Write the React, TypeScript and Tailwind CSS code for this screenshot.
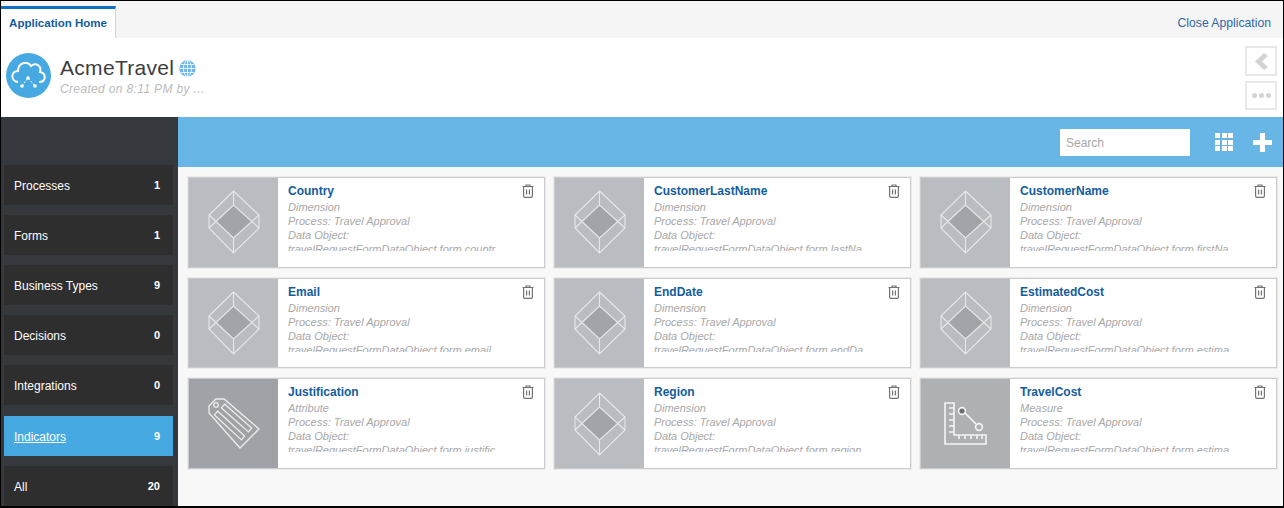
const navItems = [
    { name: 'Processes', count: 1 },
    { name: 'Forms', count: 1 },
    { name: 'Business Types', count: 9 },
    { name: 'Decisions', count: 0 },
    { name: 'Integrations', count: 0 },
    { name: 'Indicators', count: 9, active: true },
    { name: 'All', count: 20 },
];

const cards = [
    { title: 'Country', kind: 'Dimension', obj: 'travelRequestFormDataObject.form.countr...' },
    { title: 'CustomerLastName', kind: 'Dimension', obj: 'travelRequestFormDataObject.form.lastNa...' },
    { title: 'CustomerName', kind: 'Dimension', obj: 'travelRequestFormDataObject.form.firstNa...' },
    { title: 'Email', kind: 'Dimension', obj: 'travelRequestFormDataObject.form.email' },
    { title: 'EndDate', kind: 'Dimension', obj: 'travelRequestFormDataObject.form.endDa...' },
    { title: 'EstimatedCost', kind: 'Dimension', obj: 'travelRequestFormDataObject.form.estima...' },
    { title: 'Justification', kind: 'Attribute', obj: 'travelRequestFormDataObject.form.justific...' },
    { title: 'Region', kind: 'Dimension', obj: 'travelRequestFormDataObject.form.region' },
    { title: 'TravelCost', kind: 'Measure', obj: 'travelRequestFormDataObject.form.estima...' },
];

const CubeIcon = () => (
    <svg width="52" height="64" viewBox="0 0 52 64" fill="none" stroke="#e6e8ea" strokeWidth="1.1">
        <path d="M25.5 15 L43 31.5 L25.5 48 L8 31.5 Z" fill="#a1a5a9" stroke="none" />
        <path d="M25.5 1 L51 25 L51 38 L25.5 63 L1 38 L1 25 Z" />
        <path d="M25.5 1 L25.5 15 M1 25 L25.5 48 L51 25 M1 38 L25.5 15 L51 38 M25.5 48 L25.5 63" />
    </svg>
);

const TagIcon = () => (
    <svg width="52" height="52" viewBox="0 0 52 52" fill="none" stroke="#eceeef" strokeWidth="1.3">
        <path d="M1 8 L8 1 L16 1 L51 31 L32 50 L1 15 Z" />
        <circle cx="8" cy="7" r="2.3" />
        <path d="M16.6 6.1 L43.6 30.1 L40.4 33.9 L13.4 9.9 Z" />
        <path d="M9.6 13.1 L36.6 38.1 L33.4 41.9 L6.4 16.9 Z" />
    </svg>
);

const RulerIcon = () => (
    <svg width="44" height="44" viewBox="0 0 44 44" fill="none" stroke="#f4f5f6" strokeWidth="1.6">
        <path d="M1 1 L10 1 L10 33 L42 33 L42 42 L1 42 Z" />
        <path d="M5 6 L10 6 M5 12 L10 12 M5 18 L10 18 M5 24 L10 24 M5 30 L10 30" />
        <path d="M15 37 L15 33 M21 37 L21 33 M27 37 L27 33 M33 37 L33 33 M38 37 L38 33" />
        <path d="M21 11 L32 22" />
        <circle cx="18" cy="9" r="3.4" fill="#6b6f73" />
        <circle cx="35" cy="25" r="3.4" />
    </svg>
);

const TrashIcon = () => (
    <svg width="12" height="14" viewBox="0 0 12 14" fill="none" stroke="#6f7276" strokeWidth="1.2">
        <path d="M0.5 2.5 L11.5 2.5 M4 2.5 L4 1 L8 1 L8 2.5" />
        <path d="M1.6 2.5 L1.6 12 Q1.6 13.4 3 13.4 L9 13.4 Q10.4 13.4 10.4 12 L10.4 2.5" />
        <path d="M4.6 5.5 L4.6 10.5 M7.4 5.5 L7.4 10.5" />
    </svg>
);

const Card = ({ card }: { card: typeof cards[number] }) => (
    <div className="flex h-[90.7px] border border-[#cccccc] bg-white shadow-[0_0_0_1px_#ebebeb]">
        <div className={`flex w-[89px] shrink-0 items-center justify-center ${card.kind === 'Dimension' ? 'bg-[#b9bdc1]' : card.kind === 'Attribute' ? 'bg-[#9fa2a6]' : 'bg-[#adb1b4]'}`}>
            {card.kind === 'Dimension' && <CubeIcon />}
            {card.kind === 'Attribute' && <TagIcon />}
            {card.kind === 'Measure' && <RulerIcon />}
        </div>
        <div className="relative min-w-0 flex-1 pl-[10px] pt-[5px]">
            <div className="text-[12px] font-bold leading-[16px] text-[#145c9e]">{card.title}</div>
            <div className="mt-[1px] h-[51px] overflow-hidden text-[11px] italic leading-[14px] text-[#a8a8a8]">
                <div>{card.kind}</div>
                <div>Process: Travel Approval</div>
                <div>Data Object:</div>
                <div className="whitespace-nowrap">{card.obj}</div>
            </div>
            <button className="absolute right-[10px] top-[6px]"><TrashIcon /></button>
        </div>
    </div>
);

const App = () => {
    return (
        <div className="flex h-[508px] w-[1284px] flex-col overflow-hidden border border-b-2 border-black bg-white font-['Liberation_Sans',Arial,sans-serif]">
            <div className="flex h-[37px] shrink-0 items-end justify-between bg-[#f5f5f5]">
                <div className="flex h-[32px] w-[115px] items-center justify-center border-r border-t-[3px] border-r-[#cdd5dc] border-t-[#0f6fc6] bg-white text-[11.5px] font-bold text-[#145c9e]">
                    Application Home
                </div>
                <a className="mb-[6px] mr-[12px] text-[12.2px] text-[#2f68a8]">Close Application</a>
            </div>

            <div className="flex h-[79px] shrink-0 items-start justify-between">
                <div className="flex items-start pl-[5px] pt-[15px]">
                    <svg width="45" height="45" viewBox="0 0 45 45" fill="none">
                        <circle cx="22.5" cy="22.5" r="22.5" fill="#47a9e2" />
                        <path d="M12 29 C4 28 5 18 12 18 C12 10 21 7 25 13 C30 9 36 13 34 19 C41 20 40 29 33 29" stroke="#fff" strokeWidth="2" />
                        <path d="M16 33 L22 25 L29 33" stroke="#fff" strokeWidth="1" strokeDasharray="2 1.5" />
                        <circle cx="16" cy="33" r="1.8" fill="#fff" />
                        <circle cx="22" cy="25" r="1.8" fill="#fff" />
                        <circle cx="29" cy="33" r="1.8" fill="#fff" />
                    </svg>
                    <div className="ml-[9px]">
                        <div className="mt-[3px] flex items-center text-[21px] leading-[24px] tracking-[0.3px] text-[#3d3d3d]">
                            AcmeTravel
                            <svg className="ml-[5px]" width="17" height="17" viewBox="0 0 17 17" fill="none" stroke="#fff" strokeWidth="0.8">
                                <circle cx="8.5" cy="8.5" r="8.2" fill="#6db6e6" stroke="none" />
                                <ellipse cx="8.5" cy="8.5" rx="4" ry="8" />
                                <path d="M8.5 0.5 L8.5 16.5 M0.5 8.5 L16.5 8.5 M2 4.5 L15 4.5 M2 12.5 L15 12.5" />
                            </svg>
                        </div>
                        <div className="mt-[2px] text-[12px] italic leading-[14px] tracking-[0.35px] text-[#bbbbbb]">Created on 8:11 PM by ...</div>
                    </div>
                </div>
                <div className="mr-[6px] mt-[8px] flex flex-col gap-[5px]">
                    <div className="flex h-[30px] w-[32px] items-center justify-center border-2 border-[#e8e8e8]">
                        <svg width="13" height="17" viewBox="0 0 13 17"><path d="M9 0 L13 3 L7 8.5 L13 14 L9 17 L0 8.5 Z" fill="#d4d4d4" /></svg>
                    </div>
                    <div className="flex h-[29px] w-[32px] items-center justify-center gap-[2px] border-2 border-[#e8e8e8]">
                        <span className="size-[5px] rounded-full bg-[#d4d4d4]" />
                        <span className="size-[5px] rounded-full bg-[#d4d4d4]" />
                        <span className="size-[5px] rounded-full bg-[#d4d4d4]" />
                    </div>
                </div>
            </div>

            <div className="flex min-h-0 flex-1">
                <div className="flex w-[177px] shrink-0 flex-col gap-[10px] bg-[#35393e] pl-[3px] pr-[5px] pt-[48px]">
                    {navItems.map((item) => (
                        <div
                            key={item.name}
                            className={`flex h-[40px] shrink-0 items-center justify-between pl-[10px] pr-[13px] pt-[1px] text-[12px] text-white ${item.active ? 'mt-[1px] bg-[#47a9e2]' : 'bg-[#2e2e2e]'}`}
                        >
                            <span className={item.active ? 'underline' : ''}>{item.name}</span>
                            <span className="text-[11px] font-bold">{item.count}</span>
                        </div>
                    ))}
                </div>
                <div className="flex min-w-0 flex-1 flex-col bg-[#f8f8f8]">
                    <div className="flex h-[50px] shrink-0 items-center justify-end bg-[#68b6e6] pr-[11px]">
                        <input
                            placeholder="Search"
                            className="h-[27px] w-[130px] rounded-[1px] bg-white px-[6px] pt-[1px] text-[12px] placeholder:text-[#a9a9a9]"
                        />
                        <div className="ml-[25px] grid grid-cols-3 gap-[1.5px]">
                            {[...Array(9)].map((_, i) => <span key={i} className="size-[5px] bg-white" />)}
                        </div>
                        <svg className="ml-[20px]" width="19" height="19" viewBox="0 0 19 19"><path d="M7 0 H12 V7 H19 V12 H12 V19 H7 V12 H0 V7 H7 Z" fill="#fff" /></svg>
                    </div>
                    <div className="grid grid-cols-[repeat(3,357px)] gap-x-[9px] gap-y-[10px] pl-[10px] pt-[10px]">
                        {cards.map((card) => <Card key={card.title} card={card} />)}
                    </div>
                </div>
            </div>
        </div>
    );
};

export default App;
